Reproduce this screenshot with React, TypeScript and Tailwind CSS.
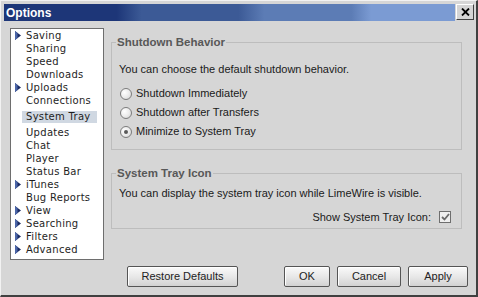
import React from 'react'

const items: { label: string; arrow?: boolean; selected?: boolean }[] = [
  { label: 'Saving', arrow: true },
  { label: 'Sharing' },
  { label: 'Speed' },
  { label: 'Downloads' },
  { label: 'Uploads', arrow: true },
  { label: 'Connections' },
  { label: 'System Tray', selected: true },
  { label: 'Updates' },
  { label: 'Chat' },
  { label: 'Player' },
  { label: 'Status Bar' },
  { label: 'iTunes', arrow: true },
  { label: 'Bug Reports' },
  { label: 'View', arrow: true },
  { label: 'Searching', arrow: true },
  { label: 'Filters', arrow: true },
  { label: 'Advanced', arrow: true },
]

function Arrow() {
  return (
    <svg width="6" height="9" viewBox="0 0 6 9">
      <polygon points="0,0 6,4.5 0,9" fill="#1a2a62" />
      <polygon points="0,0 2.5,1.9 2.5,7.1 0,9" fill="#4c66a8" />
    </svg>
  )
}

function Radio({ checked }: { checked?: boolean }) {
  return (
    <span className="flex h-[12px] w-[12px] items-center justify-center rounded-full border border-[#7c7c7c] bg-[radial-gradient(circle_at_35%_35%,#ffffff_0%,#ececec_50%,#cfcfcf_100%)]">
      {checked && <span className="h-[4px] w-[4px] rounded-full bg-[#5a5a5a]" />}
    </span>
  )
}

function Button({ children, w }: { children: React.ReactNode; w: string }) {
  return (
    <button
      className={`${w} h-[21px] rounded-[2px] border border-[#555] bg-[linear-gradient(180deg,#fafafa_0%,#e6e6e6_55%,#d2d2d2_100%)] text-[11px] text-[#222] shadow-[inset_1px_1px_0_#ffffff]`}
    >
      {children}
    </button>
  )
}

export default function App() {
  return (
    <div className="flex h-[297px] w-[478px] flex-col border-b-2 border-l border-r-2 border-t border-b-[#404040] border-l-[#f2f2f2] border-r-[#404040] border-t-[#f2f2f2] bg-[#d6d6d6] font-['Liberation_Sans',Arial,sans-serif]">
      {/* Title bar */}
      <div className="ml-[3px] mr-[2px] mt-[3px] flex h-[17px]">
        <div className="flex flex-1 items-center bg-[linear-gradient(90deg,#1d3678_0%,#1d3678_25%,#3c5a96_30.5%,#3c5a96_52%,#5c7cb5_57.7%,#5c7cb5_77%,#7b9bd3_81.4%,#7b9bd3_100%)] pl-[2px]">
          <span className="text-[12px] font-bold leading-none text-white">Options</span>
        </div>
        <div className="ml-[1px] flex h-[16px] w-[18px] items-center justify-center border border-b-[#404040] border-l-[#ffffff] border-r-[#404040] border-t-[#ffffff] bg-[#d4d4d4]">
          <svg width="9" height="8" viewBox="0 0 9 8">
            <path d="M1 0.5 L8 7.5 M8 0.5 L1 7.5" stroke="#000" strokeWidth="1.8" />
          </svg>
        </div>
      </div>

      {/* Body */}
      <div className="flex items-start">
        <div className="ml-[9px] mt-[7px] h-[232px] w-[94px] border border-[#6e6e6e] bg-white font-['DejaVu_Sans',Verdana,sans-serif] text-[10px] tracking-[0.3px] text-[#1e1e1e]">
          {items.map((it) =>
            it.selected ? (
              <div key={it.label} className="my-[3px] flex h-[13px] items-center pl-[11px]">
                <span className="flex h-[12px] items-center bg-[#d0d8e2] pl-[4px] pr-[6px] leading-none">
                  {it.label}
                </span>
              </div>
            ) : (
              <div key={it.label} className="flex h-[13px] items-center">
                <span className="flex w-[15px] items-center pl-[4px]">{it.arrow && <Arrow />}</span>
                <span className="leading-none">{it.label}</span>
              </div>
            )
          )}
        </div>

        <div className="ml-[7px] mt-[14px] w-[351px] text-[11px] text-[#1a1a1a]">
          <fieldset className="border border-[#bdbdbd]">
            <legend className="ml-[4px] px-[1px] text-[11.5px] font-bold leading-[14px] text-[#585858]">
              Shutdown Behavior
            </legend>
            <div className="pb-[8px] pl-[7px]">
              <div className="mt-[13px] leading-[14px]">You can choose the default shutdown behavior.</div>
              <div className="mt-[8px]">
                {[
                  ['Shutdown Immediately', false],
                  ['Shutdown after Transfers', false],
                  ['Minimize to System Tray', true],
                ].map(([label, checked]) => (
                  <div key={label as string} className="ml-[1px] flex h-[19px] items-center gap-[4px]">
                    <Radio checked={checked as boolean} />
                    <span>{label}</span>
                  </div>
                ))}
              </div>
            </div>
          </fieldset>

          <fieldset className="mt-[16px] border border-[#bdbdbd]">
            <legend className="ml-[4px] px-[1px] text-[11.5px] font-bold leading-[14px] text-[#585858]">
              System Tray Icon
            </legend>
            <div className="pb-[4px] pl-[7px]">
              <div className="mt-[6px] leading-[14px]">
                You can display the system tray icon while LimeWire is visible.
              </div>
              <div className="mt-[10px] flex h-[14px] items-center justify-end gap-[8px] pr-[10px]">
                <span>Show System Tray Icon:</span>
                <span className="flex h-[12px] w-[12px] items-center justify-center border border-[#6e6e6e] bg-[#efefef]">
                  <svg width="9" height="8" viewBox="0 0 9 8">
                    <path d="M1 4 L3.5 6.5 L8 1" fill="none" stroke="#6a6a6a" strokeWidth="1.8" />
                  </svg>
                </span>
              </div>
            </div>
          </fieldset>
        </div>
      </div>

      {/* Buttons */}
      <div className="ml-[126px] mr-[8px] mt-[6px] flex">
        <Button w="w-[111px]">Restore Defaults</Button>
        <div className="ml-auto flex gap-[7px]">
          <Button w="w-[46px]">OK</Button>
          <Button w="w-[64px]">Cancel</Button>
          <Button w="w-[60px]">Apply</Button>
        </div>
      </div>
    </div>
  )
}
